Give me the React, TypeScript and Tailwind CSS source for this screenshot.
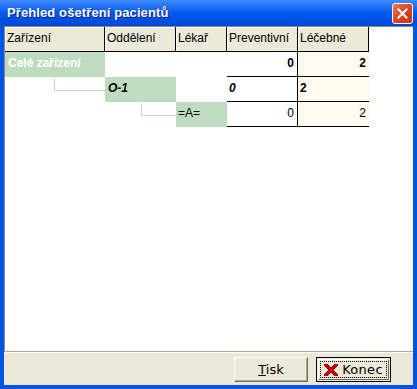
import React from 'react';

type Cell = {
  text?: string;
  className?: string;
  connector?: string;
};

const GREEN = 'bg-[#c0dcc0]';

const headers = [
  { label: 'Zařízení', width: 'w-[100px]' },
  { label: 'Oddělení', width: 'w-[71px]' },
  { label: 'Lékař', width: 'w-[51px]' },
  { label: 'Preventivní', width: 'w-[71px]' },
  { label: 'Léčebné', width: 'w-[71px]' },
];

const RedX: React.FC = () => (
  <svg width="14" height="12" viewBox="0 0 14 12" className="mr-[4px]">
    <path d="M2 1 L12 11 M12 1 L2 11" stroke="#5a0000" strokeWidth="3.6" strokeLinecap="square" />
    <path d="M2 1 L12 11 M12 1 L2 11" stroke="#d40000" strokeWidth="2.2" strokeLinecap="square" />
  </svg>
);

const App: React.FC = () => {
  // tree rows: level cell is green, previous level cell holds the connector line
  const rows: Cell[][] = [
    [
      { text: 'Celé zařízení', className: `${GREEN} font-bold text-white pl-[3px]` },
      {},
      {},
      { text: '0', className: 'font-bold text-right pr-[3px]' },
      { text: '2', className: 'font-bold text-right pr-[3px]' },
    ],
    [
      { connector: 'ml-[49px]' },
      { text: 'O-1', className: `${GREEN} font-bold italic pl-[3px]` },
      {},
      { text: '0', className: 'font-bold italic pl-[2px]' },
      { text: '2', className: 'font-bold pl-[2px]' },
    ],
    [
      {},
      { connector: 'ml-[36px]' },
      { text: '=A=', className: `${GREEN} pl-[2px]` },
      { text: '0', className: 'text-right pr-[3px]' },
      { text: '2', className: 'text-right pr-[3px]' },
    ],
  ];

  return (
    <div
      className="w-[417px] h-[389px] flex flex-col bg-[#0054e3] select-none"
      style={{ fontFamily: '"Liberation Sans", Arial, sans-serif' }}
    >
      {/* title bar */}
      <div className="h-[26px] flex items-center justify-between pl-[7px] pr-[4px] bg-gradient-to-b from-[#3d8cff] via-[#0058ee] to-[#0148d6]">
        <span className="text-white font-bold text-[13px] tracking-[0.1px] [text-shadow:1px_1px_0_#0a1e8a]">
          Přehled ošetření pacientů
        </span>
        <div className="w-[21px] h-[21px] rounded-[3px] border border-white bg-gradient-to-br from-[#e8795a] via-[#d9461f] to-[#c23a14] flex items-center justify-center">
          <svg width="11" height="11" viewBox="0 0 11 11">
            <path d="M1.5 1.5 L9.5 9.5 M9.5 1.5 L1.5 9.5" stroke="white" strokeWidth="2" strokeLinecap="square" />
          </svg>
        </div>
      </div>

      <div className="flex-1 flex flex-col mx-[4px] mb-[4px]">
        {/* grid */}
        <div className="flex-1 bg-white border-t border-l border-[#8c8a80] text-[12px] text-black leading-[14px]">
          <div className="flex">
            {headers.map((h) => (
              <div
                key={h.label}
                className={`${h.width} h-[25px] bg-[#ece9d8] border-r border-b border-black shadow-[inset_1px_1px_0_white] pl-[2px] pt-[4px]`}
              >
                {h.label}
              </div>
            ))}
          </div>
          {rows.map((row, ri) => (
            <div key={ri} className="flex">
              {row.map((cell, ci) => {
                const base = `${headers[ci].width} h-[25px] pt-[4px]`;
                const grid = ci === 3 ? 'border-b border-r border-black' : ci === 4 ? 'border-b border-black bg-[#fffbf0]' : '';
                if (cell.connector) {
                  return (
                    <div key={ci} className={`${headers[ci].width} h-[25px]`}>
                      <div className={`${cell.connector} mt-[1px] h-[13px] border-l border-b border-[#c0dcc0]`} />
                    </div>
                  );
                }
                return (
                  <div key={ci} className={`${base} ${grid} ${cell.className ?? ''}`}>
                    {cell.text}
                  </div>
                );
              })}
            </div>
          ))}
        </div>

        {/* bottom panel */}
        <div
          className="h-[34px] bg-[#ece9d8] border-t border-[#aca899] shadow-[inset_0_1px_0_white] flex items-center justify-end gap-[8px] pr-[22px] pt-[2px] text-[13px] text-black"
          style={{ fontFamily: '"DejaVu Sans", Tahoma, sans-serif' }}
        >
          <button className="w-[74px] h-[25px] bg-[#ece9d8] border border-t-white border-l-white border-r-[#716f64] border-b-[#716f64] shadow-[inset_-1px_-1px_0_#aca899]">
            <span className="underline">T</span>isk
          </button>
          <button className="w-[75px] h-[25px] bg-[#ece9d8] border border-black p-[1px]">
            <div className="w-full h-full border border-t-white border-l-white border-r-[#716f64] border-b-[#716f64] p-[1px]">
              <div className="w-full h-full border border-dotted border-black flex items-center justify-center tracking-[0.3px]">
                <RedX />
                Konec
              </div>
            </div>
          </button>
        </div>
      </div>
    </div>
  );
};

export default App;
